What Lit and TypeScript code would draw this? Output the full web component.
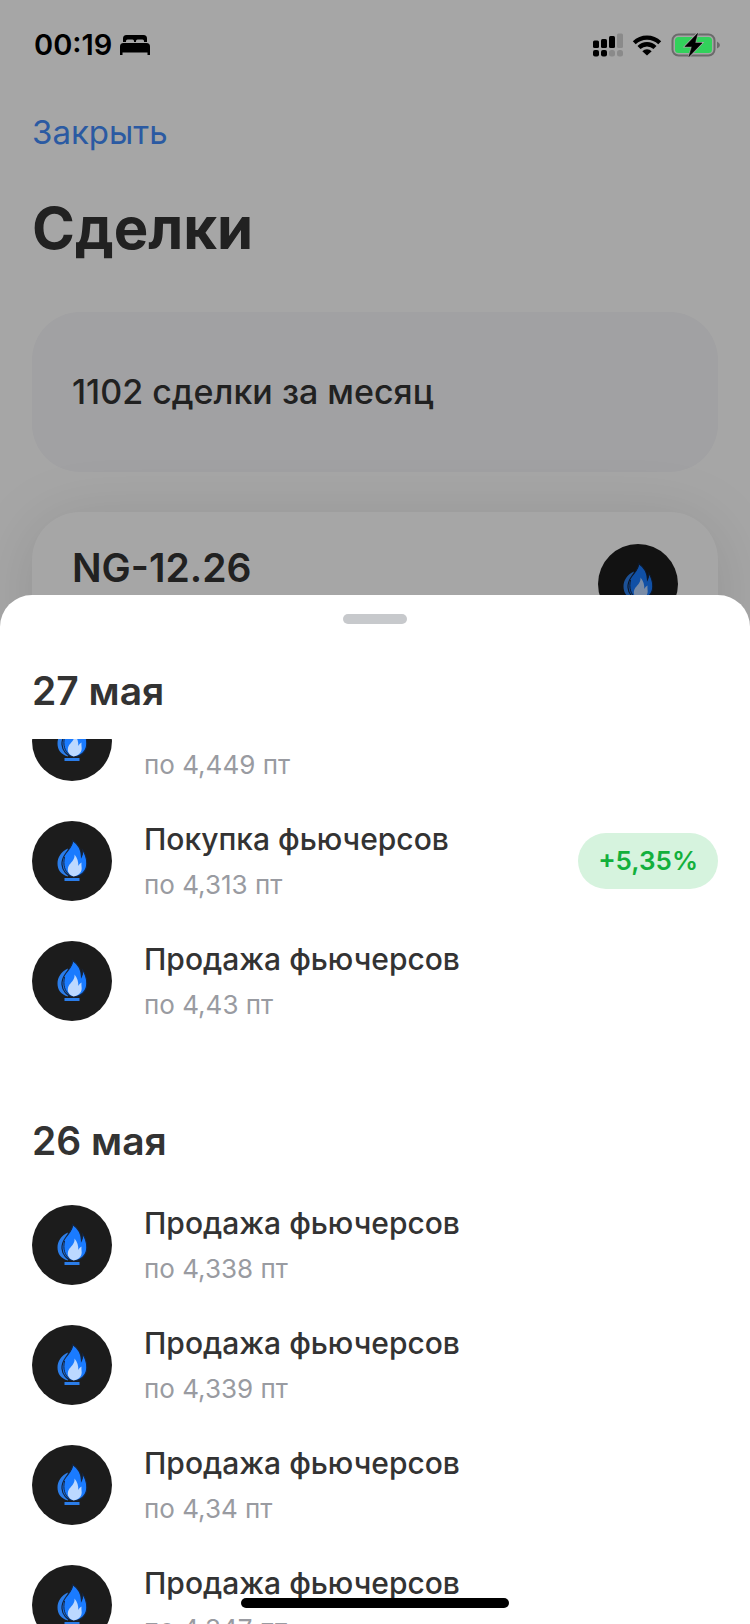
import { LitElement, html, css } from "lit";
import { customElement, property } from "lit/decorators.js";

interface Deal {
  title: string;
  price: string;
  change?: string;
}

interface Day {
  date: string;
  deals: Deal[];
}

const SELL = "Продажа фьючерсов";
const BUY = "Покупка фьючерсов";

const DAYS: Day[] = [
  {
    date: "27 мая",
    deals: [
      { title: SELL, price: "по 4,449 пт" },
      { title: BUY, price: "по 4,313 пт", change: "+5,35%" },
      { title: SELL, price: "по 4,43 пт" },
    ],
  },
  {
    date: "26 мая",
    deals: [
      { title: SELL, price: "по 4,338 пт" },
      { title: SELL, price: "по 4,339 пт" },
      { title: SELL, price: "по 4,34 пт" },
      { title: SELL, price: "по 4,347 пт" },
    ],
  },
];

@customElement("gas-icon")
export class GasIcon extends LitElement {
  static styles = css`
    :host {
      display: block;
      flex: none;
      width: 80px;
      height: 80px;
    }
    .disc {
      display: block;
      width: 100%;
      height: 100%;
    }
  `;

  render() {
    return html`<svg class="disc" viewBox="0 0 80 80" aria-hidden="true">
      <circle cx="40" cy="40" r="40" fill="#1c1c1c" />
      <path fill="#2b7de9" d="M36 27.500C29 30.500 25.500 36.500 25.500 42.500C25.500 49 29 53.500 36 55.500L33 40Z" />
      <path fill="#1a7bff" stroke="#15243c" stroke-width="1.200" d="M40.500 19.500C41 24 37.500 27.500 34 32C31 36 29.800 39.500 30 43.500C30.400 49.500 34.500 55 42 55.800C49.500 55.300 54.800 50 54.800 42.500C54.800 37.500 53.500 33 50.500 29C50.800 32.500 50.300 34 49.500 35.500C49.300 29 46 23 40.500 19.500Z" />
      <path fill="none" stroke="#15243c" stroke-width="1" d="M32.500 36C30.800 44 32.500 50 38 54.500" />
      <path fill="#bcd8ff" d="M42.500 33.500C43 38 40 40.500 37.500 43.500C34.300 48 35.500 53.500 41.500 55.500C47.500 54.500 50.300 50.500 49.600 46C49.400 44.500 49.400 43 49.500 41.500C48 42.300 47 43.500 46.300 45C46.500 41 45.500 37 42.500 33.500Z" />
      <rect x="32.500" y="57" width="15" height="3" fill="#2b7de9" />
    </svg>`;
  }
}

@customElement("deal-row")
export class DealRow extends LitElement {
  @property({ attribute: false }) deal!: Deal;

  static styles = css`
    :host {
      display: flex;
      align-items: center;
      gap: 32px;
      height: 80px;
    }
    .text {
      flex: 1;
      min-width: 0;
    }
    .title {
      color: #333;
      font-size: 30px;
      font-weight: 500;
      line-height: 40px;
    }
    .price {
      margin-top: 8px;
      color: #999ba1;
      font-size: 26px;
      line-height: 36px;
    }
    .change {
      padding: 0 20px;
      border-radius: 28px;
      background: #d6f3de;
      color: #13b03c;
      font-size: 26px;
      font-weight: 600;
      line-height: 56px;
    }
  `;

  render() {
    const { title, price, change } = this.deal;
    return html`
      <gas-icon></gas-icon>
      <div class="text">
        <div class="title">${title}</div>
        <div class="price">${price}</div>
      </div>
      ${change ? html`<span class="change">${change}</span>` : null}
    `;
  }
}

@customElement("status-bar")
export class StatusBar extends LitElement {
  static styles = css`
    :host {
      display: flex;
      align-items: center;
      height: 90px;
      padding: 0 29px 0 34px;
      color: #000;
    }
    .time {
      flex: 1;
      display: flex;
      align-items: center;
      gap: 8px;
      font-size: 29px;
      font-weight: 600;
      line-height: 36px;
    }
    .icons {
      display: flex;
      align-items: center;
      gap: 9px;
    }
    svg {
      display: block;
    }
  `;

  render() {
    return html`
      <div class="time">
        <span>00:19</span>
        <svg width="30" height="22" viewBox="0 0 30 22" aria-hidden="true">
          <path d="M3 8V4.500Q3 1 6.500 1H23.500Q27 1 27 4.500V8H24V7Q24 5.500 22.500 5.500H17.500Q16 5.500 16 7V8H14V7Q14 5.500 12.500 5.500H7.500Q6 5.500 6 7V8Z" />
          <path d="M0 21V12.500Q0 9 3.500 9H26.500Q30 9 30 12.500V21H27.500V18.500H2.500V21Z" />
        </svg>
      </div>
      <div class="icons">
        <svg width="30" height="24" viewBox="0 0 30 24" aria-hidden="true">
          <rect x="0" y="7.500" width="6" height="7.500" rx="1.500" />
          <rect x="8" y="6" width="6" height="9" rx="1.500" />
          <rect x="16" y="3" width="6" height="12" rx="1.500" />
          <rect x="24" y="0.500" width="6" height="14.500" rx="1.500" fill="#8a8a8a" />
          <rect x="0" y="17" width="6" height="6.500" rx="2" />
          <rect x="8" y="17" width="6" height="6.500" rx="2" />
          <rect x="16" y="17" width="6" height="6.500" rx="2.500" fill="#8a8a8a" />
          <rect x="24" y="17" width="6" height="6.500" rx="2.500" fill="#8a8a8a" />
        </svg>
        <svg width="30" height="22" viewBox="0 0 30 22" aria-hidden="true">
          <path d="M0.800 7.300A20.500 20.500 0 0 1 29.200 7.300L26.300 10.200A16.300 16.300 0 0 0 3.700 10.200Z" />
          <path d="M5.500 12A13.500 13.500 0 0 1 24.500 12L21.500 15A9.400 9.400 0 0 0 8.500 15Z" />
          <path d="M10.300 17.200A6.800 6.800 0 0 1 19.700 17.200L15 21.600Z" />
        </svg>
        <svg width="50" height="26" viewBox="0 0 50 26" aria-hidden="true">
          <rect x="1.500" y="2.500" width="42" height="21" rx="6" fill="none" stroke="#6b6b6b" stroke-width="2" />
          <rect x="4" y="5" width="37" height="16" rx="3.500" fill="#32d15b" />
          <path d="M46 9.500Q49 11 49 13T46 16.500Z" fill="#6b6b6b" />
          <path d="M26.500 1.500L14 14.500H21L18 24.500L31 11H24Z" stroke="#a6a6a6" stroke-width="2" />
          <path d="M26.500 1.500L14 14.500H21L18 24.500L31 11H24Z" stroke="#000" stroke-width="0.600" />
        </svg>
      </div>
    `;
  }
}

@customElement("app-root")
export class AppRoot extends LitElement {
  static styles = css`
    :host {
      display: block;
      position: relative;
      height: 100vh;
      overflow: hidden;
      background: #fff;
      color: #333;
      font-family: Inter, "Open Sans", sans-serif;
    }
    * {
      box-sizing: border-box;
    }
    h1,
    h2,
    p,
    ul {
      margin: 0;
      padding: 0;
    }
    .page {
      padding: 108px 32px 0;
    }
    .close {
      display: block;
      padding: 0;
      border: 0;
      background: none;
      color: #428bf9;
      font: inherit;
      font-size: 33px;
      line-height: 48px;
    }
    .heading {
      margin: 36px 0 48px;
      font-size: 58px;
      font-weight: 700;
      line-height: 72px;
    }
    .summary {
      padding: 56px 40px;
      border-radius: 48px;
      background: #f7f7fa;
      font-size: 34px;
      font-weight: 500;
      line-height: 48px;
    }
    .instrument {
      display: flex;
      justify-content: space-between;
      align-items: flex-start;
      margin-top: 40px;
      padding: 32px 40px;
      border-radius: 48px;
      background: #fff;
      box-shadow: 0 8px 68px rgba(0, 0, 0, 0.12);
    }
    .date,
    .ticker {
      font-size: 39px;
      font-weight: 600;
      line-height: 48px;
    }
    .scrim {
      position: absolute;
      inset: 0;
      background: rgba(0, 0, 0, 0.35);
    }
    .status {
      position: absolute;
      inset: 0 0 auto;
    }
    .sheet {
      position: absolute;
      inset: 595px 0 0;
      display: flex;
      flex-direction: column;
      border-radius: 32px 32px 0 0;
      background: #fff;
      overflow: hidden;
    }
    .handle {
      flex: none;
      display: grid;
      place-items: center;
      height: 48px;
    }
    .grip {
      width: 64px;
      height: 10px;
      border-radius: 5px;
      background: #c7c9cc;
    }
    .days {
      flex: 1;
      min-height: 0;
      overflow-y: auto;
      scrollbar-width: none;
    }
    .day {
      padding-bottom: 72px;
    }
    .date {
      position: sticky;
      top: 0;
      z-index: 1;
      padding: 24px 32px;
      background: #fff;
    }
    .deals {
      display: grid;
      gap: 40px;
      padding: 16px 32px 0;
      list-style: none;
    }
    .home {
      position: absolute;
      bottom: 16px;
      left: 50%;
      width: 268px;
      height: 10px;
      margin-left: -134px;
      border-radius: 5px;
      background: #000;
    }
  `;

  firstUpdated() {
    this.renderRoot.querySelector(".days")!.scrollTop = 54;
  }

  render() {
    return html`
      <main class="page">
        <button class="close" type="button">Закрыть</button>
        <h1 class="heading">Сделки</h1>
        <p class="summary">1102 сделки за месяц</p>
        <section class="instrument">
          <h2 class="ticker">NG-12.26</h2>
          <gas-icon></gas-icon>
        </section>
      </main>
      <div class="scrim"></div>
      <status-bar class="status"></status-bar>
      <div class="sheet" role="dialog" aria-label="Сделки">
        <div class="handle"><div class="grip"></div></div>
        <div class="days">
          ${DAYS.map(
            (day) => html`
              <section class="day">
                <h2 class="date">${day.date}</h2>
                <ul class="deals">
                  ${day.deals.map((deal) => html`<li><deal-row .deal=${deal}></deal-row></li>`)}
                </ul>
              </section>
            `
          )}
        </div>
      </div>
      <div class="home"></div>
    `;
  }
}
